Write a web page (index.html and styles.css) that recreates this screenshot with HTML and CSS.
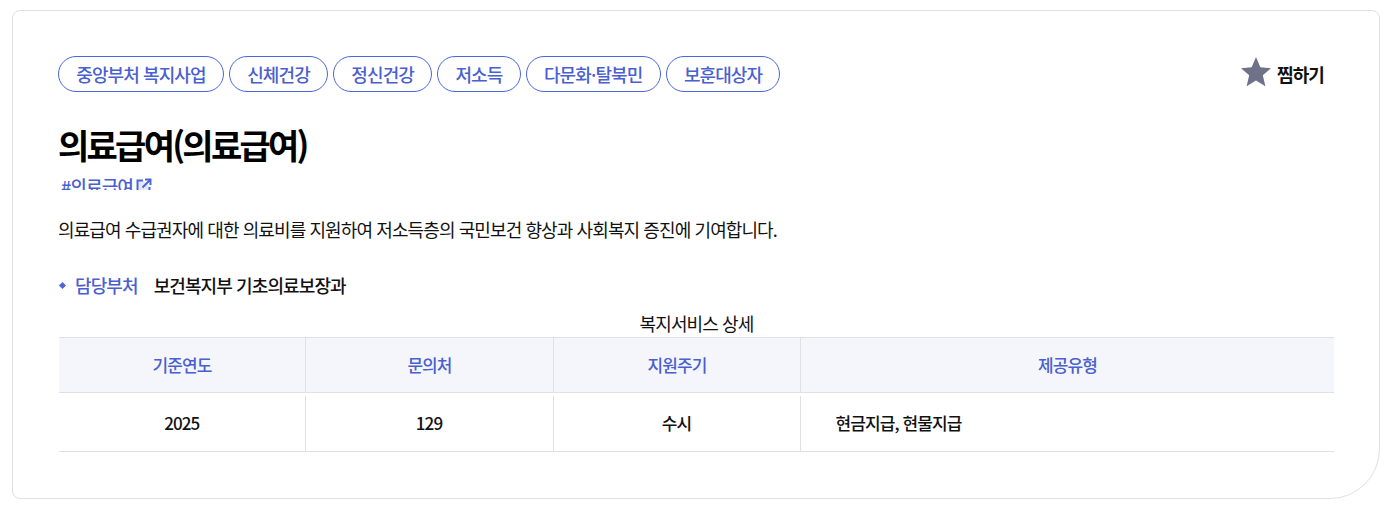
FILE: index.html
```html
<!DOCTYPE html>
<html lang="ko">
<head>
    <meta charset="UTF-8">
    <meta name="viewport" content="width=device-width, initial-scale=1.0">
    <title>의료급여</title>
    <link rel="stylesheet" href="styles.css">
</head>
<body>
    <div class="card">
        <div class="top-row">
            <ul class="tags">
                <li class="tag">중앙부처 복지사업</li>
                <li class="tag">신체건강</li>
                <li class="tag">정신건강</li>
                <li class="tag">저소득</li>
                <li class="tag">다문화·탈북민</li>
                <li class="tag">보훈대상자</li>
            </ul>
            <button class="fav">
                <svg class="fav-icon" viewBox="0.5 0.5 29 29" width="30" height="30"><path d="M15 0.5l4.2 10 10.3 0.8-7.9 6.9 2.5 10.6L15 23.1l-9.1 5.7 2.5-10.6-7.9-6.9 10.3-0.8z"/></svg>
                <span>찜하기</span>
            </button>
        </div>
        <h1 class="title">의료급여(의료급여)</h1>
        <div class="hash-row">
            <a class="hash">#의료급여
                <svg class="hash-icon" viewBox="0 0 16 16" width="16" height="16"><path d="M7 2.5H1.5v12h12V9" fill="#e6e9fa" stroke="#4a66dc" stroke-width="2"/><path d="M6.5 9.5L13.5 2.5M9 1.5h5.5V7" fill="none" stroke="#4a66dc" stroke-width="2"/></svg>
            </a>
        </div>
        <p class="desc">의료급여 수급권자에 대한 의료비를 지원하여 저소득층의 국민보건 향상과 사회복지 증진에 기여합니다.</p>
        <div class="dept">
            <span class="dept-label">담당부처</span>
            <span class="dept-value">보건복지부 기초의료보장과</span>
        </div>
        <table class="detail">
            <caption>복지서비스 상세</caption>
            <thead>
                <tr>
                    <th class="col-year">기준연도</th>
                    <th class="col-tel">문의처</th>
                    <th class="col-cycle">지원주기</th>
                    <th>제공유형</th>
                </tr>
            </thead>
            <tbody>
                <tr>
                    <td><div class="cell">2025</div></td>
                    <td><div class="cell">129</div></td>
                    <td><div class="cell">수시</div></td>
                    <td><div class="cell cell-left">현금지급, 현물지급</div></td>
                </tr>
            </tbody>
        </table>
    </div>
</body>
</html>
```

FILE: styles.css
```css
* {
    box-sizing: border-box;
}

body {
    margin: 0;
    padding: 10px 12px 8px;
    background-color: #fff;
    color: #111;
    font-family: "Noto Sans CJK KR", "Noto Sans", sans-serif;
    font-size: 18px;
    letter-spacing: -0.05em;
}

.card {
    height: 489px;
    padding: 45px 45px 0;
    border: 1px solid #e0e0e0;
    border-radius: 8px 8px 50px 8px;
}

.top-row {
    display: flex;
    justify-content: space-between;
    align-items: center;
}

.tags {
    display: flex;
    gap: 5px;
    margin: 0;
    padding: 0;
    list-style: none;
}

.tag {
    height: 36px;
    padding: 0 17.25px;
    border: 1px solid #4a66dc;
    border-radius: 18px;
    color: #4a5fd0;
    font-weight: 500;
    line-height: 34px;
}

.fav {
    display: flex;
    align-items: center;
    gap: 6px;
    margin-right: 10px;
    padding: 0;
    border: none;
    background: none;
    color: #111;
    font-family: inherit;
    font-size: 18px;
    font-weight: 700;
    letter-spacing: -0.05em;
}

.fav-icon {
    margin-bottom: 5px;
    fill: #6f7189;
}

.title {
    margin: 28px 0 0;
    color: #000;
    font-size: 34px;
    font-weight: 700;
    line-height: 50px;
    letter-spacing: -0.08em;
}

.hash-row {
    height: 20px;
    padding-left: 3px;
    overflow: hidden;
}

.hash {
    display: flex;
    align-items: center;
    gap: 3px;
    color: #4a5fd0;
    font-weight: 500;
    line-height: 32px;
}

.desc {
    margin: 24px 0 0;
    line-height: 30px;
}

.dept {
    display: flex;
    align-items: center;
    gap: 16px;
    margin-top: 26px;
    font-weight: 500;
    line-height: 30px;
}

.dept-label {
    position: relative;
    padding-left: 17px;
    color: #4a5fd0;
}

.dept-label::before {
    content: "";
    position: absolute;
    left: 2px;
    top: 13px;
    width: 5px;
    height: 5px;
    background-color: #4a66dc;
    transform: rotate(45deg);
}

.detail {
    width: calc(100% - 1px);
    margin: 10px 0 0 1px;
    border-collapse: collapse;
    table-layout: fixed;
    font-size: 17px;
}

.detail caption {
    height: 27px;
    font-size: 18px;
    line-height: 27px;
}

.col-year {
    width: 246.5px;
}

.col-tel {
    width: 248px;
}

.col-cycle {
    width: 247px;
}

.detail th {
    height: 55px;
    padding: 0 0 2px;
    border-top: 1px solid #e0e0e4;
    border-bottom: 1px solid #e0e0e4;
    border-right: 1px solid #e0e0e4;
    background-color: #f5f6fb;
    color: #4a5fd0;
    font-weight: 500;
}

.detail th:last-child {
    border-right: none;
}

.detail td {
    height: 59px;
    padding: 3px 0 0;
    border-bottom: 1px solid #e0e0e4;
}

.cell {
    display: flex;
    align-items: center;
    justify-content: center;
    height: 55px;
    padding-bottom: 2px;
    border-right: 1px solid #e0e0e4;
    font-weight: 500;
}

.detail td:last-child .cell {
    border-right: none;
}

.cell-left {
    justify-content: flex-start;
    padding-left: 35px;
}
```
